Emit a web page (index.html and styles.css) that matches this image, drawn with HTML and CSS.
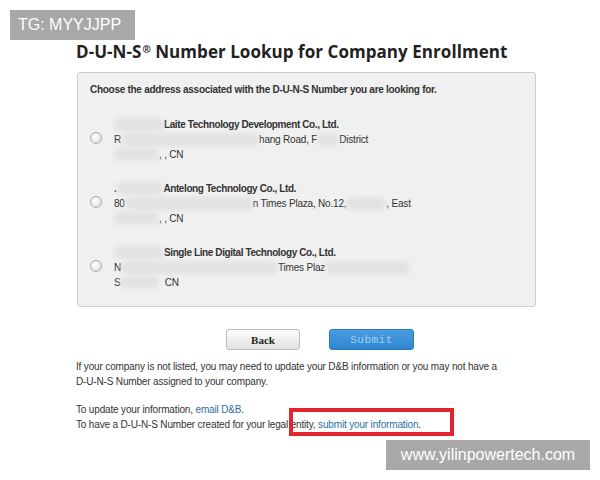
FILE: index.html
```html
<!DOCTYPE html>
<html>
<head>
<meta charset="utf-8">
<link rel="stylesheet" href="styles.css">
</head>
<body>
<div class="page">
  <h1 class="title">D-U-N-S<sup class="reg">®</sup> Number Lookup for Company Enrollment</h1>
  <div class="panel">
    <div class="prompt">Choose the address associated with the D-U-N-S Number you are looking for.</div>
    <div class="list">
      <label class="item">
        <span class="radio"></span>
        <span class="lines">
          <span class="line name"><span class="blob w50"></span>Laite Technology Development Co., Ltd.</span>
          <span class="line">R<span class="blob w138"></span>hang Road, F<span class="blob w22"></span>District</span>
          <span class="line"><span class="blob w45"></span>, , CN</span>
        </span>
      </label>
      <label class="item">
        <span class="radio"></span>
        <span class="lines">
          <span class="line name">.<span class="blob w47"></span>Antelong Technology Co., Ltd.</span>
          <span class="line">80<span class="blob w128"></span>n Times Plaza, No.12,<span class="blob w40"></span>, East</span>
          <span class="line"><span class="blob w45"></span>, , CN</span>
        </span>
      </label>
      <label class="item">
        <span class="radio"></span>
        <span class="lines">
          <span class="line name"><span class="blob w50"></span>Single Line Digital Technology Co., Ltd.</span>
          <span class="line">N<span class="blob w157"></span>Times Plaz<span class="blob w85"></span></span>
          <span class="line">S<span class="blob w39"></span>&nbsp;&nbsp;CN</span>
        </span>
      </label>
    </div>
  </div>
  <div class="actions">
    <button class="btn back">Back</button>
    <button class="btn submit">Submit</button>
  </div>
  <p class="note">If your company is not listed, you may need to update your D&amp;B information or you may not have a<br>D-U-N-S Number assigned to your company.</p>
  <p class="note">To update your information, <a class="link">email D&amp;B</a>.<br>To have a D-U-N-S Number created for your legal <span class="hl">entity, <a class="link">submit your information</a>.</span></p>
</div>
<div class="mark tg">TG: MYYJJPP</div>
<div class="mark site">www.yilinpowertech.com</div>
</body>
</html>
```
FILE: styles.css
```css
html, body {
  margin: 0;
  padding: 0;
  background: #fff;
}
body {
  width: 600px;
  height: 480px;
  position: relative;
  overflow: hidden;
  font-family: "Liberation Sans", Arial, sans-serif;
  color: #333;
}
.page {
  padding: 40px 0 0 76px;
  width: 480px;
}
.title {
  margin: 0;
  font-family: "Open Sans", "DejaVu Sans", sans-serif;
  font-weight: 700;
  font-size: 17px;
  line-height: 24px;
  color: #222;
  letter-spacing: 0.05px;
}
.reg {
  font-size: 10px;
  vertical-align: 5px;
  line-height: 0;
  margin-left: 1px;
}
.panel {
  margin-top: 8px;
  width: 457px;
  height: 233px;
  background: #f0f0f0;
  border: 1px solid #cdcdcd;
  border-radius: 3px;
  margin-left: 1px;
}
.prompt {
  font-size: 10px;
  letter-spacing: -0.28px;
  font-weight: 700;
  line-height: 14px;
  color: #333;
  padding: 10px 0 0 12px;
}
.list {
  display: flex;
  flex-direction: column;
  gap: 19px;
  padding: 20px 0 0 12px;
}
.item {
  display: flex;
  align-items: flex-start;
}
.radio {
  width: 10px;
  height: 10px;
  border-radius: 50%;
  border: 1px solid #aaa;
  background: radial-gradient(circle at 40% 35%, #fff 0%, #e6e6e6 70%);
  margin: 15px 12px 0 0;
  flex: none;
}
.lines {
  display: flex;
  flex-direction: column;
  font-size: 10px;
  letter-spacing: -0.2px;
  line-height: 15px;
  color: #333;
}
.line {
  display: flex;
  align-items: center;
  white-space: pre;
  height: 15px;
}
.name {
  font-weight: 700;
  letter-spacing: -0.4px;
}
.blob {
  display: inline-block;
  height: 13px;
  background: #e2e2e2;
  border-radius: 7px;
  filter: blur(2px);
}
.w22 { width: 22px; }
.w39 { width: 39px; }
.w40 { width: 40px; }
.w47 { width: 47px; }
.w45 { width: 45px; }
.w50 { width: 50px; }
.w85 { width: 85px; }
.w128 { width: 128px; }
.w138 { width: 138px; }
.w157 { width: 157px; }
.actions {
  display: flex;
  gap: 29px;
  padding: 22px 0 0 150px;
}
.btn {
  height: 21px;
  border-radius: 3px;
  font-family: "Liberation Serif", "DejaVu Serif", serif;
  font-weight: 700;
  font-size: 11px;
  padding: 0;
}
.back {
  width: 74px;
  border: 1px solid #bdbdbd;
  background: linear-gradient(#fdfdfd, #e2e2e2);
  color: #222;
}
.submit {
  width: 85px;
  border: 1px solid #2d78b8;
  background: linear-gradient(#4a9ce0, #2f86d0);
  color: #a6cff0;
  font-weight: 400;
  font-family: "Liberation Mono", monospace;
  letter-spacing: 0.5px;
}
.note {
  margin: 9px 0 0 0;
  font-size: 10px;
  letter-spacing: -0.16px;
  line-height: 15px;
  color: #333;
}
.note + .note {
  margin-top: 13px;
}
.link {
  color: #2e6f9e;
  text-decoration: none;
}
.hl {
  position: relative;
}
.hl::after {
  content: "";
  position: absolute;
  left: -2px;
  top: -11px;
  right: -33px;
  bottom: -6px;
  border: 4px solid #e0262c;
}
.mark {
  position: absolute;
  background: #a8a8a8;
  color: #fff;
  font-family: "Liberation Sans", Arial, sans-serif;
  font-size: 16px;
  line-height: 30px;
}
.tg {
  left: 10px;
  top: 10px;
  width: 125px;
  padding-left: 8px;
  box-sizing: border-box;
}
.site {
  left: 386px;
  top: 440px;
  width: 204px;
  text-align: center;
}
```
